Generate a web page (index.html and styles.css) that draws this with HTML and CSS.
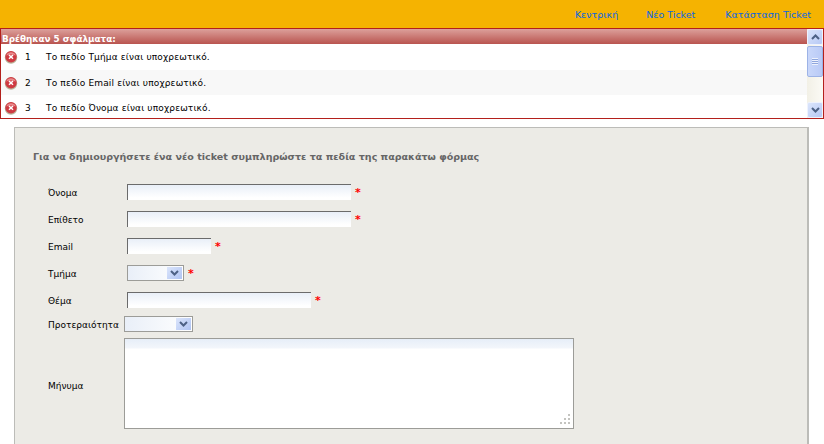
FILE: index.html
```html
<!DOCTYPE html>
<html lang="el">
<head>
<meta charset="utf-8">
<title>Νέο Ticket</title>
<link rel="stylesheet" href="styles.css">
</head>
<body>
<svg class="defs" width="0" height="0" aria-hidden="true">
  <defs>
    <symbol id="err" viewBox="0 0 14 14">
      <circle cx="7" cy="7.5" r="6.2" fill="#b9b49a"/>
      <circle cx="7" cy="6.8" r="5.7" fill="#cf3a42"/>
      <path d="M2.2 5.5A5.2 5.2 0 0 1 11.8 5.5Q7 3.5 2.2 5.5Z" fill="#e98a8c"/>
      <path d="M5 5 9 8.8M9 5 5 8.8" stroke="#fff" stroke-width="1.5" fill="none"/>
    </symbol>
    <symbol id="down" viewBox="0 0 9 6">
      <path d="M1 1 4.5 4.5 8 1" stroke="#4d6185" stroke-width="2" fill="none"/>
    </symbol>
    <symbol id="up" viewBox="0 0 9 6">
      <path d="M1 5 4.5 1.5 8 5" stroke="#4d6185" stroke-width="2" fill="none"/>
    </symbol>
  </defs>
</svg>

<header class="topbar">
  <nav class="nav">
    <a href="#" class="nav-link">Κεντρική</a>
    <a href="#" class="nav-link">Νέο Ticket</a>
    <a href="#" class="nav-link nav-link-last">Κατάσταση Ticket</a>
  </nav>
</header>

<section class="errors">
  <div class="errors-main">
    <h2 class="errors-title">Βρέθηκαν 5 σφάλματα:</h2>
    <ul class="errors-list">
      <li class="error-row error-row-first">
        <svg class="error-icon"><use href="#err"/></svg>
        <span class="error-num">1</span>
        <span class="error-text">Το πεδίο Τμήμα είναι υποχρεωτικό.</span>
      </li>
      <li class="error-row error-row-alt">
        <svg class="error-icon"><use href="#err"/></svg>
        <span class="error-num">2</span>
        <span class="error-text">Το πεδίο Email είναι υποχρεωτικό.</span>
      </li>
      <li class="error-row">
        <svg class="error-icon"><use href="#err"/></svg>
        <span class="error-num">3</span>
        <span class="error-text">Το πεδίο Όνομα είναι υποχρεωτικό.</span>
      </li>
    </ul>
  </div>
  <div class="scrollbar">
    <div class="sb-btn"><svg class="sb-arrow"><use href="#up"/></svg></div>
    <div class="sb-thumb"><span class="sb-grip"></span></div>
    <div class="sb-track"></div>
    <div class="sb-btn"><svg class="sb-arrow"><use href="#down"/></svg></div>
  </div>
</section>

<main class="panel">
  <h1 class="panel-title">Για να δημιουργήσετε ένα νέο ticket συμπληρώστε τα πεδία της παρακάτω φόρμας</h1>
  <form class="form">
    <div class="row row-std">
      <label class="label">Όνομα</label>
      <span class="input input-long"></span>
      <span class="req">*</span>
    </div>
    <div class="row row-std">
      <label class="label">Επίθετο</label>
      <span class="input input-long"></span>
      <span class="req">*</span>
    </div>
    <div class="row row-std">
      <label class="label">Email</label>
      <span class="input input-short"></span>
      <span class="req">*</span>
    </div>
    <div class="row row-std">
      <label class="label">Τμήμα</label>
      <span class="select select-dept"><span class="select-btn"><svg class="sb-arrow"><use href="#down"/></svg></span></span>
      <span class="req">*</span>
    </div>
    <div class="row row-subject">
      <label class="label">Θέμα</label>
      <span class="input input-mid"></span>
      <span class="req">*</span>
    </div>
    <div class="row row-priority">
      <label class="label label-tight">Προτεραιότητα</label>
      <span class="select select-prio"><span class="select-btn"><svg class="sb-arrow"><use href="#down"/></svg></span></span>
    </div>
    <div class="row row-message">
      <label class="label label-tight label-message">Μήνυμα</label>
      <span class="textarea"><span class="grip"></span></span>
    </div>
  </form>
</main>
</body>
</html>
```

FILE: styles.css
```css
* { box-sizing: border-box; }
html, body { margin: 0; padding: 0; height: 444px; overflow: hidden; background: #fff; }
body { font-family: "DejaVu Sans", Verdana, sans-serif; font-size: 9px; color: #000; }
.defs { position: absolute; }

.topbar { height: 28px; background: #f5b301; display: flex; justify-content: flex-end; align-items: center; padding-right: 13px; }
.nav { display: flex; gap: 28px; }
.nav-link { color: #0a66e0; text-decoration: none; font-size: 9.5px; }
.nav-link-last { margin-left: 2px; }

.errors { height: 91px; border: 1px solid #b3201c; display: flex; background: #fff; }
.errors-main { flex: 1; min-width: 0; overflow: hidden; display: flex; flex-direction: column; }
.errors-title { margin: 0; height: 15px; flex: none; padding: 4px 0 0 1px; font-size: 8.8px; line-height: 12px; font-weight: bold; color: #fff; background: linear-gradient(#dca09b, #b9544f); white-space: nowrap; overflow: hidden; }
.errors-list { list-style: none; margin: 0; padding: 0; }
.error-row { height: 25px; display: flex; align-items: center; }
.error-row-first { height: 26px; }
.error-row-alt { background: #f8f8f8; }
.error-icon { width: 14px; height: 14px; margin-left: 3px; flex: none; }
.error-num { width: 12px; margin-left: 7px; flex: none; font-size: 9px; }
.error-text { margin-left: 9px; font-size: 9px; letter-spacing: 0.15px; white-space: nowrap; }

.scrollbar { width: 16px; flex: none; display: flex; flex-direction: column; background: linear-gradient(90deg, #f2f0e6, #fbfaf5); }
.sb-btn { height: 16px; flex: none; display: flex; align-items: center; justify-content: center; background: linear-gradient(135deg, #dbe5fb, #b7c9f5); border: 1px solid #eef2fd; border-radius: 2px; }
.sb-arrow { width: 9px; height: 6px; display: block; }
.sb-thumb { height: 31px; margin-top: 1px; flex: none; display: flex; align-items: center; justify-content: center; background: linear-gradient(90deg, #c9d7fa, #b9caf6); border: 1px solid #9db3e6; border-radius: 2px; }
.sb-grip { width: 6px; height: 7px; background: repeating-linear-gradient(#eef2fd 0 1px, #8fa6dc 1px 2px); }
.sb-track { flex: 1; }

.panel { margin: 8px 15px 0 14px; height: 330px; background: #ecebe6; border: 1px solid #bcbcb8; border-width: 1px 2px 0 1px; padding: 23px 0 0 18px; }
.panel-title { margin: 0 0 21px; font-size: 9.55px; line-height: 12px; font-weight: bold; color: #666; white-space: nowrap; }
.form { display: flex; flex-direction: column; }
.row { display: flex; align-items: center; padding-left: 15px; }
.row-std { height: 27px; padding-bottom: 11px; }
.row-subject { height: 24px; padding-bottom: 8px; }
.row-priority { height: 22px; padding-bottom: 6px; }
.row-message { height: 91px; }
.label { width: 79px; flex: none; padding-top: 2px; font-size: 9px; line-height: 11px; color: #000; white-space: nowrap; }
.label-tight { width: 76px; }
.label-message { padding-top: 5px; }

.input { height: 16px; flex: none; display: block; border-top: 1px solid #6b6b6b; border-left: 1px solid #6b6b6b; background: linear-gradient(#e9eff8, #fff 85%); }
.input-long { width: 224px; }
.input-short { width: 84px; }
.input-mid { width: 184px; }
.req { margin-left: 4px; color: #f00; font-size: 11px; line-height: 11px; font-weight: bold; }

.select { height: 16px; flex: none; display: flex; justify-content: flex-end; padding: 1px; border: 1px solid #9c9c98; background: linear-gradient(90deg, #e9eff8, #fff); }
.select-dept { width: 57px; }
.select-prio { width: 69px; }
.select-btn { width: 15px; display: flex; align-items: center; justify-content: center; background: linear-gradient(135deg, #dbe5fb, #b0c4f3); }

.textarea { width: 450px; height: 91px; flex: none; display: block; position: relative; border: 1px solid #9c9c98; background: linear-gradient(#e6eef8, #f3f6fb 9px, #fff 10px); }
.grip { position: absolute; right: 3px; bottom: 4px; width: 10px; height: 10px; background:
  linear-gradient(#c4c4c0, #c4c4c0) 8px 0 / 2px 2px no-repeat,
  linear-gradient(#c4c4c0, #c4c4c0) 4px 4px / 2px 2px no-repeat,
  linear-gradient(#c4c4c0, #c4c4c0) 8px 4px / 2px 2px no-repeat,
  linear-gradient(#c4c4c0, #c4c4c0) 0 8px / 2px 2px no-repeat,
  linear-gradient(#c4c4c0, #c4c4c0) 4px 8px / 2px 2px no-repeat,
  linear-gradient(#c4c4c0, #c4c4c0) 8px 8px / 2px 2px no-repeat; }
```
